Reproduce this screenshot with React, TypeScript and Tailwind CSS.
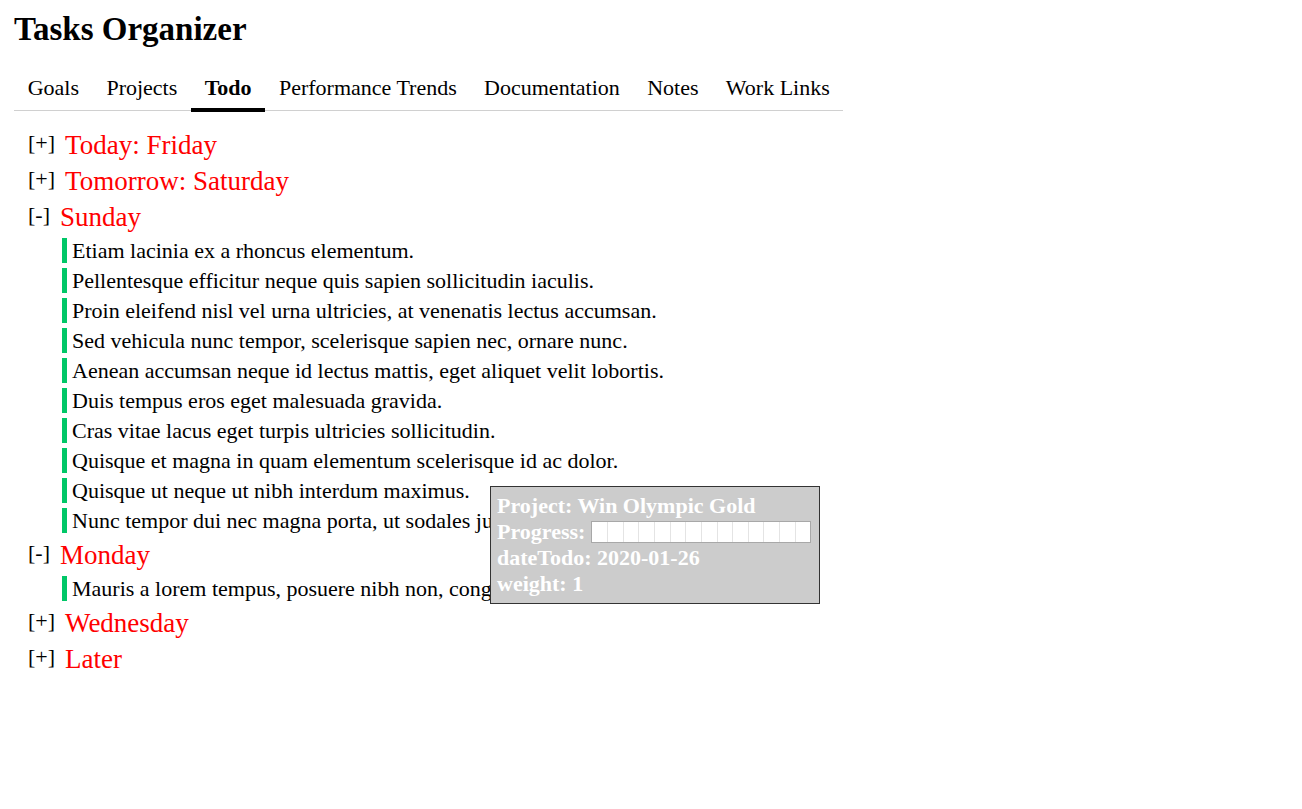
import React from "react";

const tabs = ["Goals", "Projects", "Todo", "Performance Trends", "Documentation", "Notes", "Work Links"];

type Group = { label: string; open: boolean; items: string[] };

const groups: Group[] = [
  { label: "Today: Friday", open: false, items: [] },
  { label: "Tomorrow: Saturday", open: false, items: [] },
  {
    label: "Sunday",
    open: true,
    items: [
      "Etiam lacinia ex a rhoncus elementum.",
      "Pellentesque efficitur neque quis sapien sollicitudin iaculis.",
      "Proin eleifend nisl vel urna ultricies, at venenatis lectus accumsan.",
      "Sed vehicula nunc tempor, scelerisque sapien nec, ornare nunc.",
      "Aenean accumsan neque id lectus mattis, eget aliquet velit lobortis.",
      "Duis tempus eros eget malesuada gravida.",
      "Cras vitae lacus eget turpis ultricies sollicitudin.",
      "Quisque et magna in quam elementum scelerisque id ac dolor.",
      "Quisque ut neque ut nibh interdum maximus.",
      "Nunc tempor dui nec magna porta, ut sodales justo.",
    ],
  },
  { label: "Monday", open: true, items: ["Mauris a lorem tempus, posuere nibh non, congue nisl."] },
  { label: "Wednesday", open: false, items: [] },
  { label: "Later", open: false, items: [] },
];

export default function App() {
  return (
    <div className="relative min-h-screen w-full bg-white text-black font-['Liberation_Serif','Times_New_Roman',serif] px-[14px] pt-[12px]">
      <h1 className="text-[33px] leading-[35px] font-bold">Tasks Organizer</h1>

      <nav className="mt-[20px] inline-flex border-b border-[#d0d0d0] h-[44px]">
        {tabs.map((t) => (
          <div
            key={t}
            className={
              t === "Todo"
                ? "px-[13.7px] pt-[9px] pb-[8px] text-[22px] leading-[24px] font-bold border-b-4 border-black h-[45px] -mb-[1px]"
                : "px-[13.7px] pt-[9px] pb-[8px] text-[22px] leading-[24px] border-b-4 border-transparent h-[45px] -mb-[1px]"
            }
          >
            {t}
          </div>
        ))}
      </nav>

      <div className="mt-[16px] pl-[14px]">
        {groups.map((g) => (
          <div key={g.label}>
            <div className="flex items-start py-[3px]">
              <span className="text-[22px] leading-[24px] pt-[1px]">{g.open ? "[-]" : "[+]"}</span>
              <span className="ml-[10px] text-[27px] leading-[30px] text-[#ff0000]">{g.label}</span>
            </div>
            {g.open && (
              <div className="ml-[34px]">
                {g.items.map((it) => (
                  <div key={it} className="mt-[3px] mb-[2px]">
                    <span className="inline-block border-l-[5px] border-[#00c767] pl-[5px] text-[22px] leading-[25px]">
                      {it}
                    </span>
                  </div>
                ))}
              </div>
            )}
          </div>
        ))}
      </div>

      <div className="absolute left-[490px] top-[486px] w-[330px] h-[118px] border border-[#333333] bg-[#cccccc] px-[6px] py-[6px] text-white font-bold text-[22px] leading-[26px]">
        <div>Project: Win Olympic Gold</div>
        <div className="flex items-center h-[26px]">
          <span>Progress:</span>
          <div className="ml-[6px] flex w-[220px] h-[22px] border border-[#a8a8a8] bg-white">
            {Array.from({ length: 14 }).map((_, i) => (
              <div key={i} className={i < 13 ? "flex-1 border-r border-[#e4e4e4]" : "flex-1"} />
            ))}
          </div>
        </div>
        <div>dateTodo: 2020-01-26</div>
        <div>weight: 1</div>
      </div>
    </div>
  );
}
